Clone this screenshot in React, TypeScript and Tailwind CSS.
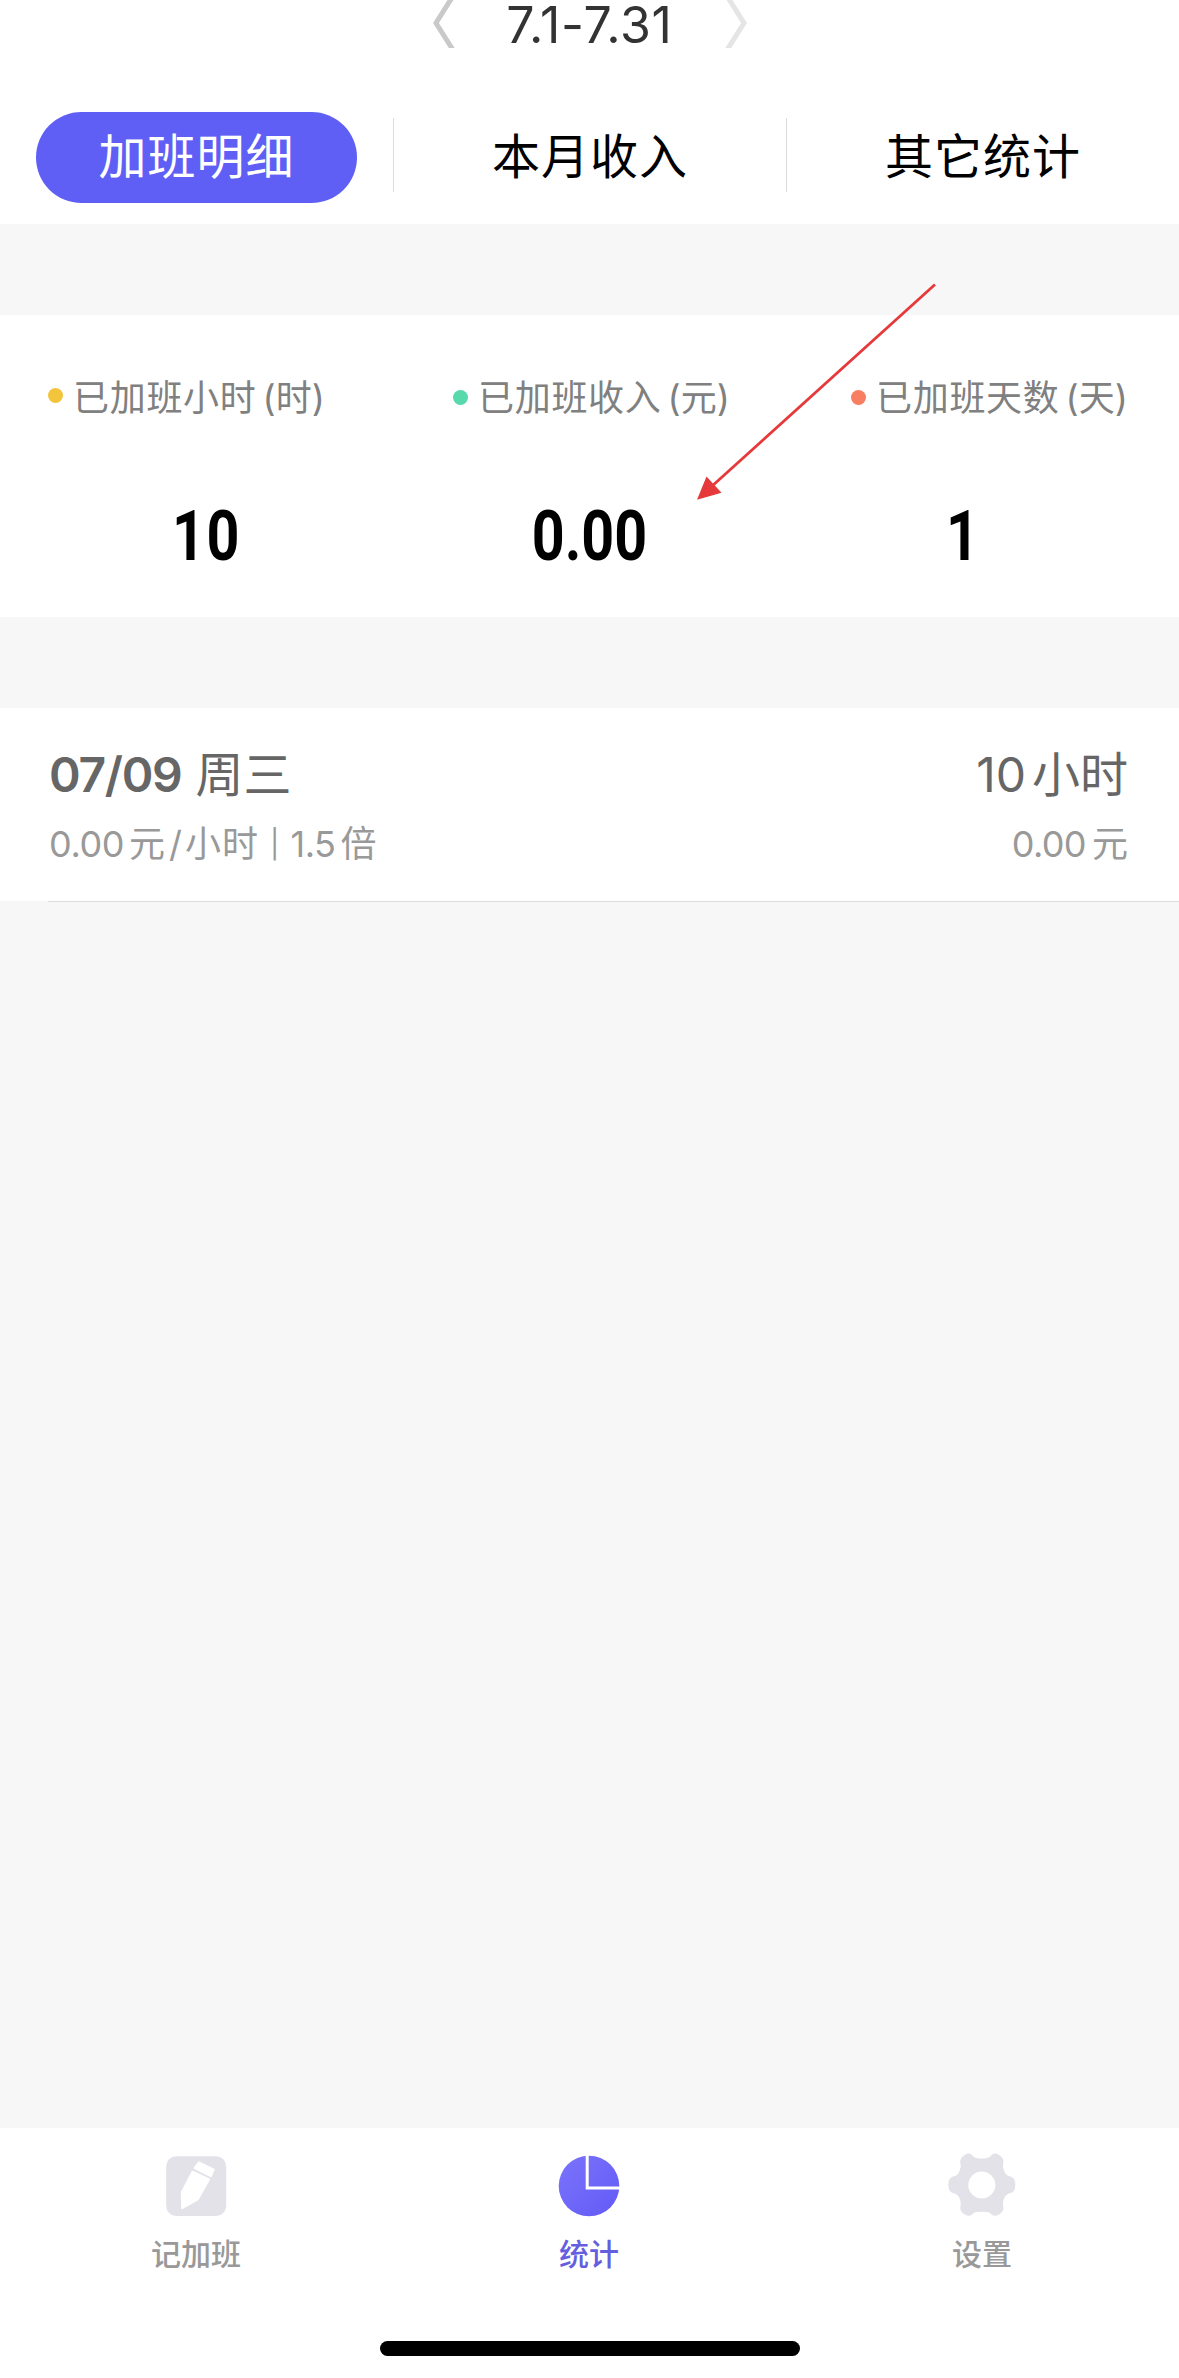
import React from "react";

const stats = [
  { label: "已加班小时", unit: "(时)", value: "10", dot: "bg-[#f2c53d] -top-[1px]", box: "pl-[48px]", num: "left-[10px] tracking-[2px]" },
  { label: "已加班收入", unit: "(元)", value: "0.00", dot: "bg-[#57d9ac] top-[1px]", box: "pl-[60px]", num: "left-0" },
  { label: "已加班天数", unit: "(天)", value: "1", dot: "bg-[#f77e60] top-[1px]", box: "pl-[65px]", num: "-left-[20px]" },
];

function PencilIcon() {
  return (
    <svg className="h-[66px] w-[70px]" viewBox="19.5 24 210 198" fill="none">
      <rect x="35" y="34" width="180" height="179" rx="30" fill="#e3e2e8" />
      <path d="M133 53 L177 74 L169 93 L121 69 Z" fill="#fff" stroke="#fff" strokeWidth="7" strokeLinejoin="round" />
      <path d="M114 80 L164 103 L130 163 L83 189 L82 142 Z" fill="#fff" stroke="#fff" strokeWidth="6" strokeLinejoin="round" />
    </svg>
  );
}

function PieIcon() {
  return (
    <svg className="h-[66px] w-[70px]" viewBox="0 0 70 66" fill="none">
      <defs>
        <linearGradient id="pie" x1="0" y1="0" x2="1" y2="1">
          <stop offset="0" stopColor="#7b74fb" />
          <stop offset="1" stopColor="#625af6" />
        </linearGradient>
      </defs>
      <circle cx="35" cy="33" r="30.300" fill="url(#pie)" />
      <path d="M33.200 1 V35 H68" stroke="#fff" strokeWidth="3" />
    </svg>
  );
}

function GearIcon() {
  return (
    <svg className="h-[66px] w-[70px] overflow-visible" viewBox="22.5 24 210 198" fill="none">
      <path
        d="M72 32 Q86 21 97 29 Q103 38 111 39 Q127 42 143 39 Q151 38 157 29 Q168 21 182 32 Q195 42 191 56 Q188 66 194 78 Q199 92 211 94 Q223 97 226 108 Q229 119 226 131 Q223 142 211 145 Q199 148 194 160 Q188 172 191 183 Q195 197 182 206 Q168 217 157 209 Q151 202 143 201 Q127 199 111 201 Q103 202 97 209 Q86 217 72 206 Q59 197 63 183 Q66 172 60 160 Q55 148 43 145 Q31 142 28 131 Q25 119 28 108 Q31 97 43 94 Q55 92 60 78 Q66 66 63 56 Q59 42 72 32 Z"
        fill="#e3e2e8"
      />
      <circle cx="127" cy="120" r="40.500" fill="#fff" />
    </svg>
  );
}

const nav = [
  { label: "记加班", icon: <PencilIcon />, color: "text-[#999999]" },
  { label: "统计", icon: <PieIcon />, color: "text-[#655fe0]" },
  { label: "设置", icon: <GearIcon />, color: "text-[#999999]" },
];

export default function App() {
  return (
    <div className="relative flex h-[2378px] w-[1179px] flex-col overflow-hidden bg-[#f7f7f7] font-['Inter','Noto_Sans_CJK_SC',sans-serif]">
      <header className="flex h-[224px] flex-col bg-white">
        <div className="flex h-[48px] items-start justify-center gap-[48px]">
          <svg className="h-[48px] w-[24px] shrink-0" viewBox="0 0 24 48" fill="none">
            <path d="M21 -4 L4 23 L21 50" stroke="#c9c9c9" strokeWidth="5" />
          </svg>
          <h1 className="w-[172px] text-center text-[50px] leading-[50px] tracking-[0.7px] whitespace-nowrap text-[#333333]">7.1-7.31</h1>
          <svg className="h-[48px] w-[24px] shrink-0" viewBox="0 0 24 48" fill="none">
            <path d="M3 -4 L20 23 L3 50" stroke="#e5e5e5" strokeWidth="5" />
          </svg>
        </div>
        <nav className="mt-[64px] flex h-[91px] text-[48px] leading-[90px] tracking-[1px] text-black">
          <div className="flex w-[393px] justify-center">
            <div className="h-[91px] w-[321px] rounded-full bg-[#605ff5] text-center text-white">加班明细</div>
          </div>
          <div className="flex w-[394px] items-start justify-between">
            <i className="mt-[6px] h-[74px] w-px bg-[#dcdcdc]" />
            <div className="flex-1 text-center">本月收入</div>
            <i className="mt-[6px] h-[74px] w-px bg-[#dcdcdc]" />
          </div>
          <div className="w-[392px] text-center">其它统计</div>
        </nav>
      </header>

      <section className="mt-[91px] flex h-[302px] bg-white">
        {stats.map((s) => (
          <div key={s.label} className="w-[393px]">
            <div className={`mt-[54px] flex h-[54px] items-center ${s.box}`}>
              <i className={`relative size-[15px] shrink-0 rounded-full ${s.dot}`} />
              <span className="ml-[10px] pt-[3px] text-[36px] leading-[54px] tracking-[0.7px] whitespace-nowrap text-[#808080]">
                {s.label}
                <span className="ml-[6px] tracking-[0px]">{s.unit}</span>
              </span>
            </div>
            <div className={`relative mt-[73px] flex h-[80px] scale-x-[0.82] items-center justify-center font-['Roboto'] text-[70px] leading-[80px] font-bold text-black ${s.num}`}>{s.value}</div>
          </div>
        ))}
      </section>

      <section className="mt-[91px] flex h-[193px] justify-between bg-white pr-[51px] pl-[49px]">
        <div className="pt-[37px]">
          <div className="flex h-[60px] items-center text-[48px] leading-[60px] text-[#666666]">
            <span className="font-semibold tracking-[-1.3px]">07/09</span>
            <span className="ml-[14px]">周三</span>
          </div>
          <div className="mt-[12px] flex h-[54px] items-center text-[36px] leading-[54px] whitespace-nowrap text-[#999999]">
            <span className="tracking-[-0.4px]">0.00</span>
            <span className="ml-[5px]">元</span>
            <span className="ml-[4px]">/</span>
            <span className="ml-[3px] tracking-[1px]">小时</span>
            <span className="ml-[11px] text-[28px]">|</span>
            <span className="ml-[11px] tracking-[-0.4px]">1.5</span>
            <span className="ml-[5px]">倍</span>
          </div>
        </div>
        <div className="flex flex-col items-end pt-[37px]">
          <div className="flex h-[60px] items-center text-[48px] leading-[60px] text-[#666666]">
            <span>10</span>
            <span className="ml-[6px]">小时</span>
          </div>
          <div className="mt-[12px] flex h-[54px] items-center text-[36px] leading-[54px] text-[#999999]">
            <span className="tracking-[-0.6px]">0.00</span>
            <span className="ml-[6px]">元</span>
          </div>
        </div>
      </section>
      <div className="ml-[48px] h-px bg-[#dedede]" />

      <footer className="mt-auto flex h-[250px] flex-col items-center bg-white">
        <div className="grid w-full grid-cols-3 pt-[25px]">
          {nav.map((n) => (
            <div key={n.label} className={`flex flex-col items-center pr-px ${n.color}`}>
              {n.icon}
              <span className="mt-[13px] text-[30px] leading-[44px] font-medium">{n.label}</span>
            </div>
          ))}
        </div>
        <div className="mt-[65px] h-[15px] w-[420px] rounded-full bg-black" />
      </footer>

      <svg className="absolute top-[280px] left-[690px] h-[226px] w-[250px]" viewBox="690 280 250 226" fill="none">
        <path d="M935 284.500 L711 487" stroke="#e5393b" strokeWidth="2.800" />
        <path d="M697 499.700 L706.500 476.500 L721.500 492.700 Z" fill="#e5393b" />
      </svg>
    </div>
  );
}
